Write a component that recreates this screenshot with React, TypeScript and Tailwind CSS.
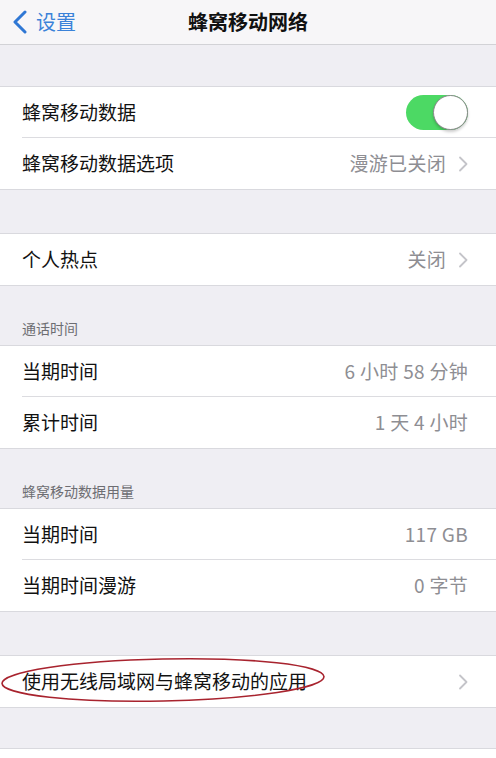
import React from "react";

const font = { fontFamily: '"Noto Sans CJK SC", "Noto Sans", sans-serif' };

function Chevron() {
  return (
    <svg width="10" height="16" viewBox="0 0 10 16" className="ml-[12px]">
      <path d="M2 1.5 L8.5 8 L2 14.5" fill="none" stroke="#c4c4c9" strokeWidth="1.8" strokeLinecap="round" strokeLinejoin="round" />
    </svg>
  );
}

function Row({ label, value, chevron, last, children }: { label: string; value?: string; chevron?: boolean; last?: boolean; children?: React.ReactNode }) {
  return (
    <div className="flex h-[51px] items-stretch bg-white pl-[22px]">
      <div className={`flex flex-1 items-center pr-[28px] ${last ? "" : "border-b border-[#dcdce0]"}`}>
        <span className="flex-1 text-[19px] text-[#111]">{label}</span>
        {value && <span className="whitespace-pre text-[19px] tracking-[0.3px] text-[#8e8e93]">{value}</span>}
        {chevron && <Chevron />}
        {children}
      </div>
    </div>
  );
}

function Section({ children }: { children: React.ReactNode }) {
  return <div className="border-y border-[#d9d9de] bg-white">{children}</div>;
}

function Header({ text, h }: { text: string; h: string }) {
  return (
    <div className={`flex ${h} items-end pb-[6px] pl-[22px] text-[14px] text-[#6d6d72]`}>{text}</div>
  );
}

export default function App() {
  return (
    <div className="relative h-[758px] w-[496px] overflow-hidden bg-[#efeef3]" style={font}>
      <div className="relative flex h-[45px] items-center justify-center border-b border-[#d2d2d6] bg-[#f7f6f8]">
        <div className="absolute left-[12px] top-0 flex h-[44px] items-center">
          <svg width="16" height="24" viewBox="0 0 16 24">
            <path d="M13 2 L3 12 L13 22" fill="none" stroke="#2f77d4" strokeWidth="3" strokeLinecap="round" strokeLinejoin="round" />
          </svg>
          <span className="ml-[8px] text-[20px] text-[#3b82d9]">设置</span>
        </div>
        <span className="text-[20px] font-bold text-[#111]">蜂窝移动网络</span>
      </div>
      <div className="h-[41px]" />
      <Section>
        <Row label="蜂窝移动数据">
          <div className="relative h-[35px] w-[62px] rounded-full bg-[#4cd964]">
            <div className="absolute right-[0px] top-[0px] h-[35px] w-[35px] rounded-full border border-[#8a8a8a] bg-white shadow-[0_2px_3px_rgba(0,0,0,0.2)]" />
          </div>
        </Row>
        <Row label="蜂窝移动数据选项" value="漫游已关闭" chevron last />
      </Section>
      <div className="h-[43px]" />
      <Section>
        <Row label="个人热点" value="关闭" chevron last />
      </Section>
      <Header text="通话时间" h="h-[59px]" />
      <Section>
        <Row label="当期时间" value="6 小时 58 分钟" />
        <Row label="累计时间" value="1 天 4 小时" last />
      </Section>
      <Header text="蜂窝移动数据用量" h="h-[59px]" />
      <Section>
        <Row label="当期时间" value="117 GB" />
        <Row label="当期时间漫游" value="0 字节" last />
      </Section>
      <div className="h-[43px]" />
      <Section>
        <Row label="使用无线局域网与蜂窝移动的应用" chevron last />
      </Section>
      <div className="h-[40px]" />
      <div className="h-[20px] border-t border-[#d9d9de] bg-white" />
      <svg className="pointer-events-none absolute left-0 top-[651px]" width="340" height="60" viewBox="0 0 340 60">
        <ellipse cx="163" cy="29" rx="161" ry="21" fill="none" stroke="#a8232e" strokeWidth="1.6" transform="rotate(-1.2 163 29)" />
      </svg>
    </div>
  );
}
